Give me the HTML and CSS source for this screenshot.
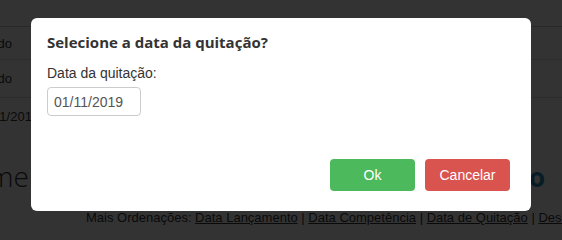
FILE: index.html
```html
<!DOCTYPE html>
<html lang="pt-BR">
<head>
<meta charset="utf-8">
<title>Selecione a data da quitação</title>
<link rel="stylesheet" href="styles.css">
</head>
<body>
<div class="page">
  <div class="grid">
    <div class="row head"></div>
    <div class="row r1"><div class="cell">Quitado</div></div>
    <div class="row r2"><div class="cell">Quitado</div></div>
    <div class="row r3"><div class="cell date">01/11/2019</div></div>
  </div>
  <div class="heading">
    <span class="heading-title">Lançamentos</span>
    <span class="heading-bank">Banco</span>
  </div>
  <div class="sort">Mais Ordenações: <a href="#">Data Lançamento</a> | <a href="#">Data Competência</a> | <a href="#">Data de Quitação</a> | <a href="#">Descrição</a></div>
</div>
<div class="overlay"></div>
<div class="modal">
  <h2 class="modal-title">Selecione a data da quitação?</h2>
  <label class="field-label" for="dt">Data da quitação:</label>
  <input class="field-input" id="dt" type="text" value="01/11/2019">
  <div class="actions">
    <button class="btn btn-ok" type="button">Ok</button>
    <button class="btn btn-cancel" type="button">Cancelar</button>
  </div>
</div>
</body>
</html>
```

FILE: styles.css
```css
html, body {
  margin: 0;
  padding: 0;
  width: 562px;
  height: 234px;
  overflow: hidden;
  background: #ffffff;
  font-family: Arial, "Liberation Sans", sans-serif;
  color: #333333;
}

.page {
  display: flex;
  flex-direction: column;
}

.grid {
  display: flex;
  flex-direction: column;
}

.row {
  display: flex;
  align-items: center;
  border-bottom: 1px solid #dddddd;
  font-size: 13px;
}

.head {
  height: 26px;
  border-bottom: 1px solid #c8c8c8;
}

.r1 { height: 32px; }
.r2 { height: 37px; }
.r3 { height: 36px; border-bottom: none; }

.cell {
  width: 12px;
  display: flex;
  justify-content: flex-end;
  white-space: nowrap;
}

.cell.date {
  width: auto;
  margin-left: -25px;
  justify-content: flex-start;
}

.heading {
  display: flex;
  justify-content: space-between;
  align-items: baseline;
  margin-top: 23px;
  height: 40px;
}

.heading-title {
  font-family: "Open Sans", sans-serif;
  font-weight: 300;
  font-size: 28px;
  color: #333333;
  margin-left: -85px;
  white-space: nowrap;
}

.heading-bank {
  font-family: "Open Sans", sans-serif;
  font-weight: 700;
  font-size: 26px;
  color: #2a8ab8;
  margin-right: 17px;
}

.sort {
  padding-left: 86px;
  font-size: 13px;
  line-height: 15px;
  white-space: nowrap;
  margin-top: 13px;
}

.sort a {
  color: #333333;
  text-decoration: underline;
}

.overlay {
  position: fixed;
  inset: 0;
  background: rgba(0, 0, 0, 0.8);
}

.modal {
  position: absolute;
  left: 31px;
  top: 18px;
  width: 500px;
  height: 193px;
  box-sizing: border-box;
  background: #ffffff;
  border-radius: 6px;
  padding: 13px 21px 20px 16px;
  display: flex;
  flex-direction: column;
  align-items: flex-start;
}

.modal-title {
  margin: 0;
  font-family: "Open Sans", sans-serif;
  font-weight: 700;
  font-size: 15px;
  line-height: 22px;
  color: #333333;
}

.field-label {
  margin-top: 11px;
  font-size: 14px;
  line-height: 18px;
  color: #333333;
}

.field-input {
  margin-top: 5px;
  width: 94px;
  height: 29px;
  box-sizing: border-box;
  border: 1px solid #cccccc;
  border-radius: 4px;
  padding: 0 6px;
  font-family: Arial, "Liberation Sans", sans-serif;
  font-size: 14px;
  color: #555555;
  background: #ffffff;
  outline: none;
}

.actions {
  margin-top: auto;
  align-self: flex-end;
  display: flex;
  gap: 10px;
}

.btn {
  width: 85px;
  height: 32px;
  border: none;
  border-radius: 4px;
  font-family: Arial, "Liberation Sans", sans-serif;
  font-size: 14px;
  color: #ffffff;
  cursor: pointer;
}

.btn-ok { background: #4cb95c; }
.btn-cancel { background: #d9534f; }
```
